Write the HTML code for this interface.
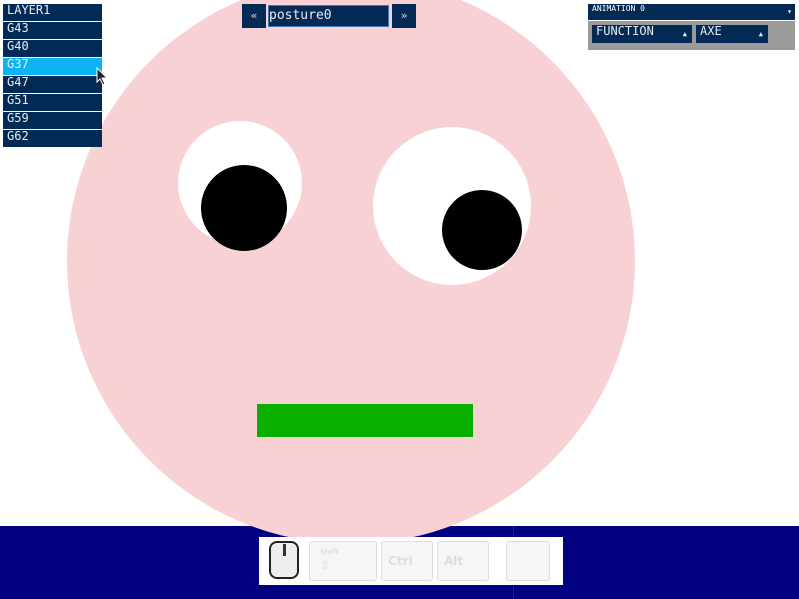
<!DOCTYPE html><html><head><style>
body{margin:0;width:799px;height:599px;position:relative;overflow:hidden;background:#fff;font-family:"DejaVu Sans Mono","Liberation Mono",monospace}
.a{position:absolute}
.r{position:absolute;left:3px;width:99px;height:17px;background:#032a54;color:#e8eef4;font-size:12px;line-height:13px;padding-left:4px;box-sizing:border-box}
.c{position:absolute;border-radius:50%}
.k{position:absolute;top:541px;height:38px;background:#f6f6f6;border:1px solid #ddd;border-radius:3px;color:#ddd;font-family:"DejaVu Sans",sans-serif;font-weight:bold;font-size:12px}
</style></head><body>
<div class="a" style="left:0;top:526px;width:799px;height:73px;background:#000080"></div>
<div class="a" style="left:513px;top:526px;width:1px;height:73px;background:#1a1a9a"></div>
<div class="c" style="left:67px;top:-22px;width:568px;height:566px;background:#f7d1d3"></div>
<div class="c" style="left:178px;top:121px;width:124px;height:124px;background:#fff"></div>
<div class="c" style="left:201px;top:165px;width:86px;height:86px;background:#000"></div>
<div class="c" style="left:373px;top:127px;width:158px;height:158px;background:#fff"></div>
<div class="c" style="left:442px;top:190px;width:80px;height:80px;background:#000"></div>
<div class="a" style="left:257px;top:404px;width:216px;height:33px;background:#0ab000"></div>
<div class="r" style="top:4px">LAYER1</div>
<div class="r" style="top:22px">G43</div>
<div class="r" style="top:40px">G40</div>
<div class="r" style="top:58px;background:#0db4f4">G37</div>
<div class="r" style="top:76px">G47</div>
<div class="r" style="top:94px">G51</div>
<div class="r" style="top:112px">G59</div>
<div class="r" style="top:130px">G62</div>
<svg class="a" style="left:96px;top:67px" width="14" height="20"><path d="M1 1 L1 15 L4 12 L7 18 L9 17 L6 11 L11 11 Z" fill="#222" stroke="#fff" stroke-width="1"/></svg>
<div class="a" style="left:242px;top:4px;width:24px;height:24px;background:#032a54;color:#ddd;font-size:11px;text-align:center;line-height:24px">«</div>
<div class="a" style="left:268px;top:5px;width:121px;height:22px;background:#032a54;border:1px solid #3a7ac0;box-sizing:border-box;color:#e8eef4;font-size:13px;line-height:20px">posture0</div>
<div class="a" style="left:392px;top:4px;width:24px;height:24px;background:#032a54;color:#ddd;font-size:11px;text-align:center;line-height:24px">»</div>
<div class="a" style="left:588px;top:4px;width:207px;height:16px;background:#032a54;color:#fff;font-size:8px;line-height:10px;padding-left:4px;box-sizing:border-box">ANIMATION 0<span style="position:absolute;right:3px;top:3px">▾</span></div>
<div class="a" style="left:588px;top:21px;width:207px;height:29px;background:#9a9a9a"></div>
<div class="a" style="left:592px;top:25px;width:100px;height:18px;background:#032a54;color:#e8eef4;font-size:12px;line-height:13px;padding-left:4px;box-sizing:border-box">FUNCTION<span style="position:absolute;right:5px;top:3px;font-size:7px">▲</span></div>
<div class="a" style="left:696px;top:25px;width:72px;height:18px;background:#032a54;color:#e8eef4;font-size:12px;line-height:13px;padding-left:4px;box-sizing:border-box">AXE<span style="position:absolute;right:5px;top:3px;font-size:7px">▲</span></div>
<div class="a" style="left:259px;top:537px;width:304px;height:48px;background:#fff"></div>
<div class="a" style="left:269px;top:541px;width:30px;height:38px;border:2px solid #222;border-radius:8px;background:#eee;box-sizing:border-box"></div>
<div class="a" style="left:283px;top:544px;width:3px;height:12px;background:#333"></div>
<div class="k" style="left:309px;width:66px"><span style="font-size:7px;position:absolute;left:10px;top:6px">Shift</span><span style="position:absolute;left:10px;top:16px">⇧</span></div>
<div class="k" style="left:381px;width:50px"><span style="position:absolute;left:6px;top:12px">Ctrl</span></div>
<div class="k" style="left:437px;width:50px"><span style="position:absolute;left:6px;top:12px">Alt</span></div>
<div class="k" style="left:506px;width:42px"></div>
</body></html>
